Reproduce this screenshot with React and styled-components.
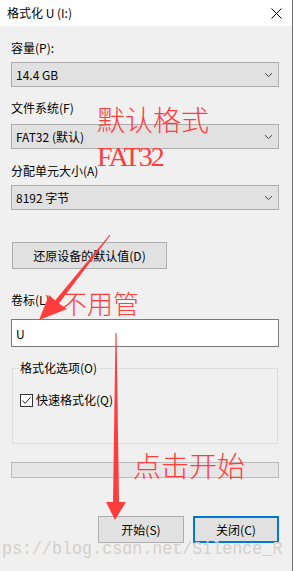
import React from "react";
import styled, { createGlobalStyle } from "styled-components";

const GlobalStyle = createGlobalStyle`
  html, body {
    margin: 0;
    padding: 0;
    background: #f0f0f0;
  }
`;

const RED = "#ff3d3d";

const Window = styled.div`
  position: relative;
  width: 293px;
  height: 571px;
  box-sizing: border-box;
  overflow: hidden;
  background: #f0f0f0;
  border-right: 1px solid #707070;
  font-family: "Noto Sans CJK SC", "Microsoft YaHei", sans-serif;
  font-size: 12px;
  color: #000;
`;

const TitleBar = styled.div`
  height: 26px;
  background: #fff;
  display: flex;
  align-items: center;
  justify-content: space-between;
  padding: 0 10px 0 7px;
`;

const Title = styled.span`
  line-height: 16px;
`;

const Body = styled.div`
  display: flex;
  flex-direction: column;
  padding: 14px 13px 0 11px;
`;

const Label = styled.div`
  height: 16px;
  line-height: 16px;
  margin-top: ${(p) => p.$mt || 0}px;
`;

const Select = styled.div`
  height: 25px;
  box-sizing: border-box;
  margin-top: ${(p) => p.$mt || 0}px;
  background: #e1e1e1;
  border: 1px solid #adadad;
  display: flex;
  align-items: center;
  justify-content: space-between;
  padding: 0 5px 0 4px;
`;

const Button = styled.div`
  height: 27px;
  box-sizing: border-box;
  width: ${(p) => p.$w}px;
  margin-top: ${(p) => p.$mt || 0}px;
  margin-left: ${(p) => p.$ml || 0}px;
  background: #e1e1e1;
  border: ${(p) => (p.$focus ? "2px solid #0078d7" : "1px solid #adadad")};
  display: flex;
  align-items: center;
  justify-content: center;
`;

const TextInput = styled.div`
  height: 28px;
  box-sizing: border-box;
  margin-top: 11px;
  background: #fff;
  border: 1px solid #7a7a7a;
  display: flex;
  align-items: center;
  padding-left: 4px;
`;

const GroupBox = styled.div`
  margin: 21px 1px 0;
  height: 76px;
  box-sizing: border-box;
  border: 1px solid #dcdcdc;
  padding: 0 6px;
  display: flex;
  flex-direction: column;
  align-items: flex-start;
`;

const Legend = styled.div`
  margin: -9px 0 0 0;
  padding: 0 1px;
  line-height: 16px;
  background: #f0f0f0;
`;

const CheckRow = styled.div`
  margin-top: 17px;
  padding-left: 1px;
  display: flex;
  align-items: center;
  gap: 3px;
  line-height: 14px;
`;

const CheckBox = styled.div`
  width: 13px;
  height: 13px;
  box-sizing: border-box;
  border: 1px solid #333;
  background: #fff;
  display: flex;
  align-items: center;
  justify-content: center;
`;

const Progress = styled.div`
  margin-top: 18px;
  height: 16px;
  box-sizing: border-box;
  background: #e6e6e6;
  border: 1px solid #bcbcbc;
`;

const ButtonRow = styled.div`
  margin-top: 38px;
  display: flex;
  justify-content: flex-end;
  gap: 9px;
`;

const Watermark = styled.div`
  position: absolute;
  left: 2px;
  top: 540px;
  font-family: "Liberation Mono", monospace;
  font-size: 16.7px;
  line-height: 20px;
  color: #d4cfc9;
  white-space: nowrap;
  transform: scaleY(1.12);
  transform-origin: left center;
  pointer-events: none;
`;

const Note = styled.div`
  position: absolute;
  left: ${(p) => p.$x}px;
  top: ${(p) => p.$y}px;
  font-family: ${(p) =>
    p.$latin
      ? '"Liberation Serif", serif'
      : '"Noto Sans CJK SC", sans-serif'};
  font-size: ${(p) => p.$size}px;
  font-weight: 300;
  line-height: 1;
  letter-spacing: ${(p) => p.$ls || 0}px;
  color: ${RED};
  white-space: nowrap;
  pointer-events: none;
`;

const Overlay = styled.svg`
  position: absolute;
  left: 0;
  top: 0;
  pointer-events: none;
`;

const Chevron = () => (
  <svg width="9" height="6" viewBox="0 0 9 6">
    <path d="M1 1.2 L4.5 4.6 L8 1.2" fill="none" stroke="#444" strokeWidth="1" />
  </svg>
);

const CloseIcon = () => (
  <svg width="11" height="11" viewBox="0 0 11 11">
    <path d="M0.5 0.5 L10.5 10.5 M10.5 0.5 L0.5 10.5" stroke="#000" strokeWidth="1" />
  </svg>
);

const Check = () => (
  <svg width="11" height="11" viewBox="0 0 11 11">
    <path d="M1.5 5.5 L4.2 8.3 L9.6 2.2" fill="none" stroke="#222" strokeWidth="1" />
  </svg>
);

export default function App() {
  const fields = [
    { label: "文件系统(F)", value: "FAT32 (默认)", lmt: 13, smt: 8 },
    { label: "分配单元大小(A)", value: "8192 字节", lmt: 14, smt: 6 },
  ];

  return (
    <Window>
      <GlobalStyle />
      <TitleBar>
        <Title>格式化 U (I:)</Title>
        <CloseIcon />
      </TitleBar>
      <Body>
        <Label>容量(P):</Label>
        <Select $mt={6}>
          <span>14.4 GB</span>
          <Chevron />
        </Select>
        {fields.map((f) => (
          <React.Fragment key={f.label}>
            <Label $mt={f.lmt}>{f.label}</Label>
            <Select $mt={f.smt}>
              <span>{f.value}</span>
              <Chevron />
            </Select>
          </React.Fragment>
        ))}
        <Button $w={155} $mt={32} $ml={1}>还原设备的默认值(D)</Button>
        <Label $mt={23}>卷标(L)</Label>
        <TextInput>U</TextInput>
        <GroupBox>
          <Legend>格式化选项(O)</Legend>
          <CheckRow>
            <CheckBox>
              <Check />
            </CheckBox>
            <span>快速格式化(Q)</span>
          </CheckRow>
        </GroupBox>
        <Progress />
        <ButtonRow>
          <Button $w={86}>开始(S)</Button>
          <Button $w={86} $focus>关闭(C)</Button>
        </ButtonRow>
      </Body>

      <Watermark>ps://blog.csdn.net/Silence_R</Watermark>

      <Note $x={97} $y={105} $size={28}>默认格式</Note>
      <Note $x={97} $y={143} $size={28} $latin $ls={-2}>FAT32</Note>
      <Note $x={61} $y={290} $size={26}>不用管</Note>
      <Note $x={133} $y={451} $size={28}>点击开始</Note>

      <Overlay width="293" height="571" viewBox="0 0 293 571">
        <path
          d="M109.6 234.7 L110.4 235.3 L58.9 303.6 L67 309 L39 320 L49 295 L55.1 300.4 Z"
          fill={RED}
        />
        <path
          d="M115.5 333 L116.5 333 L119 502 L126 502 L115 520 L106 502 L113 502 Z"
          fill={RED}
        />
      </Overlay>
    </Window>
  );
}
